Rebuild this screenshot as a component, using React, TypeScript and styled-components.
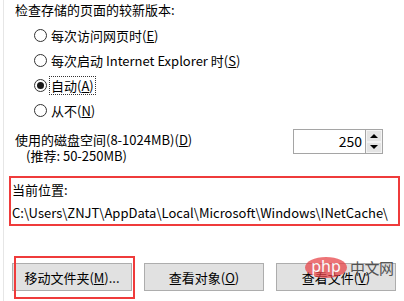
import React from "react";
import styled, { createGlobalStyle } from "styled-components";

const GlobalStyle = createGlobalStyle`
  html, body {
    margin: 0;
    padding: 0;
    background: #ffffff;
  }
  body {
    font-family: "Noto Sans CJK SC", "Noto Sans", sans-serif;
    font-size: 13px;
    color: #000000;
  }
`;

const options = [
  { label: "每次访问网页时", key: "E", checked: false },
  { label: "每次启动 Internet Explorer 时", key: "S", checked: false },
  { label: "自动", key: "A", checked: true },
  { label: "从不", key: "N", checked: false },
];

export default function App() {
  return (
    <>
      <GlobalStyle />
      <Page>
        <Panel>
          <SectionTitle>检查存储的页面的较新版本:</SectionTitle>

          <RadioList>
            {options.map((o) => (
              <RadioRow key={o.key}>
                <RadioCircle $checked={o.checked} />
                <RadioLabel $focused={o.checked}>
                  {o.label}(<u>{o.key}</u>)
                </RadioLabel>
              </RadioRow>
            ))}
          </RadioList>

          <DiskRow>
            <DiskText>
              <DiskLine>
                使用的磁盘空间(8-1024MB)(<u>D</u>)
              </DiskLine>
              <DiskHint>(推荐: 50-250MB)</DiskHint>
            </DiskText>
            <Spinner>
              <SpinInput>250</SpinInput>
              <SpinButtons>
                <SpinBtn>
                  <Arrow $up />
                </SpinBtn>
                <SpinBtn>
                  <Arrow />
                </SpinBtn>
              </SpinButtons>
            </Spinner>
          </DiskRow>

          <LocationBox>
            <LocationLine>当前位置:</LocationLine>
            <LocationLine>C:\Users\ZNJT\AppData\Local\Microsoft\Windows\INetCache\</LocationLine>
          </LocationBox>

          <ButtonRow>
            <ButtonSlot>
              <DialogButton>
                移动文件夹(<u>M</u>)...
              </DialogButton>
              <Highlight />
            </ButtonSlot>
            <DialogButton>
              查看对象(<u>O</u>)
            </DialogButton>
            <DialogButton>
              查看文件(<u>V</u>)
            </DialogButton>
          </ButtonRow>

          <Watermark>
            <PhpBadge>php</PhpBadge>
            <WatermarkText>中文网</WatermarkText>
          </Watermark>
        </Panel>
      </Page>
    </>
  );
}

const Page = styled.div`
  width: 404px;
  height: 301px;
  padding-left: 3px;
  box-sizing: border-box;
  overflow: hidden;
`;

const Panel = styled.div`
  position: relative;
  height: 100%;
  border-left: 1px solid #e6e6e6;
  box-sizing: border-box;
`;

const SectionTitle = styled.div`
  height: 20px;
  line-height: 20px;
  padding-left: 11px;
`;

const RadioList = styled.div`
  padding-top: 3px;
  padding-left: 30px;
`;

const RadioRow = styled.div`
  height: 25px;
  display: flex;
  align-items: center;
`;

const RadioCircle = styled.span<{ $checked: boolean }>`
  width: 13px;
  height: 13px;
  border: 1px solid #333333;
  border-radius: 50%;
  box-sizing: border-box;
  display: flex;
  align-items: center;
  justify-content: center;
  margin-right: 3px;

  &::after {
    content: "";
    display: ${(p) => (p.$checked ? "block" : "none")};
    width: 7px;
    height: 7px;
    border-radius: 50%;
    background: #1a1a1a;
  }
`;

const RadioLabel = styled.span<{ $focused: boolean }>`
  line-height: 17px;
  padding: 0 1px;
  outline: ${(p) => (p.$focused ? "1px dotted #333333" : "none")};
`;

const DiskRow = styled.div`
  display: flex;
  align-items: flex-start;
  margin-top: 6px;
  padding-left: 11px;
  padding-right: 21px;
`;

const DiskText = styled.div`
  padding-top: 3px;
  flex: 1;
`;

const DiskLine = styled.div`
  line-height: 16px;
`;

const DiskHint = styled.div`
  line-height: 16px;
  padding-left: 11px;
`;

const Spinner = styled.div`
  display: flex;
  height: 25px;
`;

const SpinInput = styled.div`
  width: 72px;
  height: 25px;
  box-sizing: border-box;
  border: 1px solid #a5a5a5;
  border-right: none;
  text-align: right;
  padding-right: 3px;
  line-height: 23px;
  font-size: 14px;
`;

const SpinButtons = styled.div`
  width: 18px;
  display: flex;
  flex-direction: column;
  border: 1px solid #a5a5a5;
  box-sizing: border-box;
`;

const SpinBtn = styled.div`
  flex: 1;
  background: #e4e4e4;
  border: 1px solid #f4f4f4;
  display: flex;
  align-items: center;
  justify-content: center;
`;

const Arrow = styled.span<{ $up?: boolean }>`
  width: 0;
  height: 0;
  border-left: 4px solid transparent;
  border-right: 4px solid transparent;
  ${(p) => (p.$up ? "border-bottom: 4px solid #000;" : "border-top: 4px solid #000;")}
`;

const LocationBox = styled.div`
  margin: 12px 0 0 5px;
  width: 391px;
  box-sizing: border-box;
  border: 2px solid #ef3b3b;
  padding-left: 1px;
`;

const LocationLine = styled.div`
  line-height: 23px;
  white-space: nowrap;
`;

const ButtonRow = styled.div`
  display: flex;
  gap: 12px;
  margin-top: 37px;
  padding-left: 8px;
`;

const ButtonSlot = styled.div`
  position: relative;
`;

const DialogButton = styled.div`
  width: 120px;
  height: 28px;
  box-sizing: border-box;
  background: #e1e1e1;
  border: 1px solid #adadad;
  display: flex;
  align-items: center;
  justify-content: center;
  font-size: 13px;
`;

const Highlight = styled.div`
  position: absolute;
  left: 2px;
  top: -7px;
  width: 121px;
  height: 43px;
  box-sizing: border-box;
  border: 2px solid #ef3b3b;
  pointer-events: none;
`;

const Watermark = styled.div`
  position: absolute;
  left: 301px;
  top: 257px;
  display: flex;
  align-items: center;
  gap: 3px;
  opacity: 0.85;
`;

const PhpBadge = styled.div`
  width: 42px;
  height: 21px;
  border-radius: 50%;
  background: rgba(232, 64, 68, 0.85);
  color: #ffffff;
  font-family: "Noto Sans", sans-serif;
  font-size: 16px;
  line-height: 19px;
  text-align: center;
`;

const WatermarkText = styled.div`
  color: #3a3a3a;
  font-size: 15px;
  line-height: 18px;
  letter-spacing: -0.5px;
`;
